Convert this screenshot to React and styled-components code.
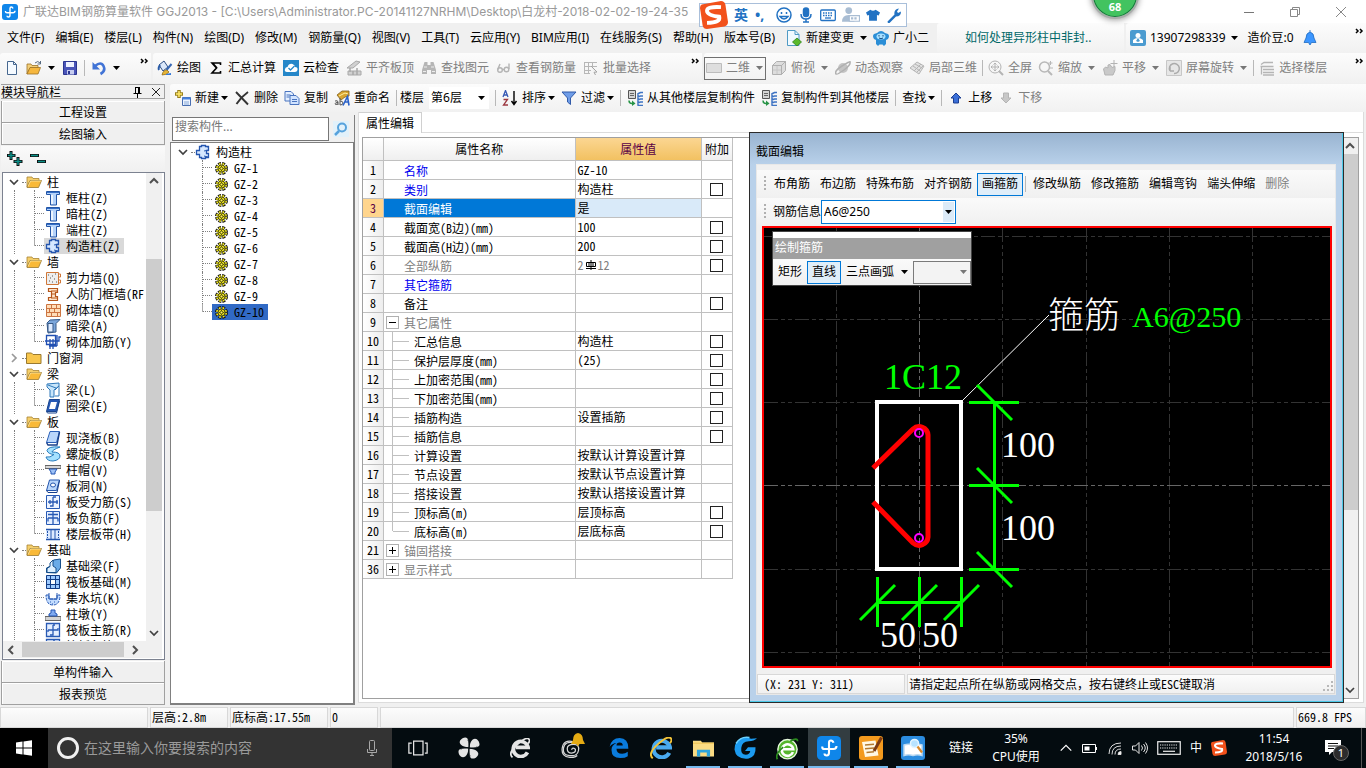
import React from "react";
import styled, { createGlobalStyle, css } from "styled-components";

const GlobalStyle = createGlobalStyle`
  * {
    box-sizing: border-box;
  }
  body {
    margin: 0;
    background: #f0f0f0;
    color: #000;
    font-family: "Noto Sans", "Noto Sans CJK SC", sans-serif;
    font-size: 12px;
    line-height: 16px;
  }
  button, input, select {
    font: inherit;
    color: inherit;
    margin: 0;
  }
  button {
    padding: 0;
    border: none;
    background: none;
    white-space: nowrap;
  }
  svg {
    display: block;
    flex-shrink: 0;
  }
`;

const song = `"Noto Sans Mono CJK SC", "Liberation Mono", "Noto Sans CJK SC", monospace`;

const shapes = {
  app: (
    <>
      <rect width="16" height="16" rx="3" fill="#0f86ea" />
      <path d="M11 4.500Q10.500 3 9.300 3 8 3 8 4.500V11q0 2-1.500 2T5 11.700M3.500 7v.500q0 1.200 1.500 1.200h6q2 0 2-2" fill="none" stroke="#fff" strokeWidth="1.400" />
    </>
  ),
  page: <path d="M3.500 1.500h6l3 3v10h-9zM9.500 1.500v3h3" fill="#f5faff" stroke="#46678f" />,
  folderOpen: (
    <>
      <path d="M1 3h5l1 1.500h6V7H4l-3 6z" fill="#f5cf6b" stroke="#a88434" strokeWidth=".8" />
      <path d="M1 13.500 4 6.500h11.500l-3 7z" fill="#f9b938" stroke="#9a7a30" strokeWidth=".8" />
      <path d="M2 12.500 4.500 7H15" fill="none" stroke="#fff0b5" strokeWidth=".7" />
    </>
  ),
  folder: <path d="M.5 3h5l1.500 1.500h8v9H.5z" fill="#f8c64d" stroke="#9a7a30" />,
  openFile: (
    <>
      <path d="M1 4h4l1 1.500h6V8H4l-3 6z" fill="#f3cf79" stroke="#9c7227" strokeWidth=".8" />
      <path d="M1 14 4 7.500h10.500L12 14z" fill="#f6b73e" stroke="#9c7227" strokeWidth=".8" />
      <path d="M9 3q3-3 5 0M14.500 1v3h-3" fill="none" stroke="#566a80" />
    </>
  ),
  save: (
    <>
      <path d="M1.500 1.500h13v13h-13z" fill="#4a55b8" stroke="#2b3590" />
      <path d="M4 2h8v5H4z" fill="#eef1ff" />
      <path d="M5 10h7v4.500H5z" fill="#c7cdf0" />
      <path d="M6 11h2v3H6z" fill="#2b3590" />
    </>
  ),
  undo: (
    <>
      <path d="M4 6q6-5 8.500 0t-3 8" fill="none" stroke="#4174d6" strokeWidth="2.600" />
      <path d="M1.500 2v7.500H9z" fill="#4174d6" />
    </>
  ),
  paint: (
    <>
      <path d="M2 5 7 1l4 6-5 4z" fill="#dbe8fa" stroke="#2c4d83" />
      <path d="M3 5q-2 3-1 5" stroke="#295ba8" strokeWidth="2" fill="none" />
      <path d="m14.500 4-5 6" stroke="#3767b4" strokeWidth="2" />
      <path d="M5 15q1-5 5-5l2 2q-2 3-7 3" fill="#e8b635" stroke="#866213" strokeWidth=".7" />
      <path d="m9 14 5-1v2H9z" fill="#3779d8" />
    </>
  ),
  sigma: <path d="M12.500 5V3H4l4.500 5L4 13h8.500v-2M5 3.500 9 8" fill="none" stroke="#000" strokeWidth="1.600" />,
  cloud: (
    <>
      <rect width="16" height="16" fill="#2687c9" />
      <path d="M4 12q-3-.5-2-3 .5-2 2.500-2Q6 3 9.500 4q2.500 1 2.500 3 3 0 2.500 3-.5 2-2.500 2z" fill="#fff" />
      <path d="m5.500 8 2 2 4-4" fill="none" stroke="#2687c9" strokeWidth="1.300" />
    </>
  ),
  align: (
    <>
      <path d="M1 8 10 1l4 1-7 6zM2 11h13v4H2z" fill="#d0d0d0" stroke="#a8a8a8" />
      <path d="M4 8v4M7 11v4M11 8v7" stroke="#a8a8a8" strokeWidth="1.500" />
    </>
  ),
  binoculars: (
    <>
      <path d="M3.500 2h3v3h3V2h3l2.500 8v4h-5v-4h-4v4H1v-4z" fill="#b5b5b5" />
      <path d="M3 7h3M10 7h3M2 11.500h3M11 11.500h3" stroke="#ededed" />
    </>
  ),
  glasses: (
    <g fill="none" stroke="#b4b4b4" strokeWidth="1.400">
      <circle cx="4" cy="10" r="2.300" />
      <circle cx="10.500" cy="9.500" r="2.300" />
      <path d="M6 9.500h2.500M1.700 9.500 4 4M13 9V3.500" />
    </g>
  ),
  batch: (
    <>
      <path d="M1.500 2v12M5.500 2v12M9.500 2v5M1 2.500h13M1 6.500h13M1 10.500h7M1 13.500h6" stroke="#b7b7b7" fill="none" />
      <path d="m8 6 6 6-3 .3 1.500 2.700" stroke="#a4a4a4" fill="#eee" />
    </>
  ),
  flat: <path d="M.5 3.500h15v9H.5z" fill="#dedede" stroke="#bcbcbc" />,
  cube: (
    <>
      <path d="M1.500 5.500h9v9h-9zM1.500 5.500l4-4h9l-4 4zM10.500 14.500l4-4v-9l-4 4z" fill="#ddd" stroke="#b0b0b0" />
      <path d="M2 10h8M6 6v8" stroke="#c6c6c6" />
    </>
  ),
  orbit: (
    <>
      <circle cx="8" cy="8" r="5" fill="#c4c4c4" />
      <path d="M1 14q-2-3 6-8t8-4q1 3-6 8t-8 4" fill="none" stroke="#b0b0b0" strokeWidth="1.500" />
    </>
  ),
  local3d: (
    <>
      <path d="m1 8 7-6 7 4-5 8z" fill="#e2e2e2" stroke="#b5b5b5" />
      <path d="m4 6 7 5M6 4l7 4M5 11l7-7M8 12l6-6" stroke="#b5b5b5" fill="none" />
    </>
  ),
  fullscreen: (
    <g fill="none" stroke="#b4b4b4">
      <circle cx="7" cy="7" r="6" />
      <path d="M7 3v8M3 7h8M5.500 4.500 7 3l1.500 1.500M5.500 9.500 7 11l1.500-1.500M4.500 5.500 3 7l1.500 1.500M9.500 5.500 11 7 9.500 8.500" />
      <path d="m11 11 4 4" strokeWidth="2" />
    </g>
  ),
  zoomIcon: (
    <g fill="none" stroke="#b8b8b8">
      <circle cx="6.500" cy="7" r="5" strokeWidth="1.500" />
      <path d="m10 11 4 4" strokeWidth="2" />
      <path d="M12.500 1v4M10.500 3h4M11 8h4" />
    </g>
  ),
  pan: (
    <>
      <path d="M3 15 1.500 9l2-2L6 8V5l2-.500 2 3 3-1v4L11 15z" fill="#c9c9c9" stroke="#b3b3b3" />
      <path d="M12 0v7M8.500 3.500h7" stroke="#b3b3b3" />
    </>
  ),
  rotate: (
    <>
      <path d="M.5.500h15v15H.5z" fill="#e6e6e6" stroke="#c7c7c7" />
      <path d="M4 11a5 5 0 1 1 4 2.500M4 11v-4M4 11h4" fill="none" stroke="#ababab" strokeWidth="1.500" />
    </>
  ),
  floors: <path d="M2 4.500 5 2.500h9M1.500 6.500h13M4 9.500h11M4 12.500h11M4 15h11M2.500 6.500v8" fill="none" stroke="#b5b5b5" strokeWidth="1.300" />,
  newItem: (
    <>
      <path d="M4 0v8M0 4h8" stroke="#98801c" strokeWidth="3.500" />
      <path d="M4 1v6M1 4h6" stroke="#ffe76a" strokeWidth="1.600" />
      <path d="M7.500 7.500h8v8h-8z" fill="#edf4ff" stroke="#496eb1" />
      <path d="M7.500 8.500h8" stroke="#4380df" strokeWidth="2" />
      <path d="M9 12h5M9 14h5" stroke="#87a8d7" />
    </>
  ),
  cross: <path d="m2 2 12 12.500M14 2Q7 7 2.500 14" fill="none" stroke="#333" strokeWidth="1.900" />,
  copy: (
    <>
      <path d="M1 1.500h6l2.500 2.500v7H1z" fill="#e4efff" stroke="#4a74bf" />
      <path d="M6 5.500h6l3 3v6H6z" fill="#d2e4ff" stroke="#4a74bf" />
      <path d="M2.500 5h4M2.500 7h3M8 9.500h5M8 11.500h5" stroke="#4a74bf" />
    </>
  ),
  rename: (
    <>
      <path d="m3 5 5-4h7v5l-4 1-4 3z" fill="#d9a52f" stroke="#7d5e1a" strokeWidth=".8" />
      <path d="m5 6 6-3 3 1" stroke="#fff0a0" fill="none" />
      <path d="M1 11q3-1 3 1v3M4 12.500q-3 0-3 1.300t3 .2M6 8v7q3 0 3-2t-3-2" stroke="#555" fill="none" />
      <path d="m9 15.500 4.500-9 1.500 9M11 12h4" fill="none" stroke="#2b62c9" strokeWidth="1.600" />
    </>
  ),
  sort: (
    <>
      <path d="m1 7 2.500-6.500L6 7M2 5h3" fill="none" stroke="#3659b5" strokeWidth="1.300" />
      <path d="M1.500 9.500h4l-4 5.500h4.500" fill="none" stroke="#9c3941" strokeWidth="1.300" />
      <path d="M12 1v13M9.500 11l2.500 3.500 2.500-3.500" fill="none" stroke="#000" strokeWidth="1.400" />
    </>
  ),
  filter: <path d="M1 2h14l-5.500 6v6.500L6.500 12V8z" fill="#6f9de8" stroke="#315aa8" />,
  copyFloor: (
    <>
      <path d="M1.500.500h7v8h-7z" fill="#d5d5d5" stroke="#555" />
      <path d="M3 3.500h4M3 5.500h4" stroke="#666" />
      <path d="M2 10.500q0 3 3 3h1" fill="none" stroke="#279346" strokeWidth="1.500" />
      <path d="m5 10.500 3.500 3L5 16z" fill="#279346" />
      <path d="m10.500 4 3-1.500H16M10.500 7l3-1H16M10.500 10l3-1H16M10.500 13l3-1H16M10.500 15.500H16M11 3.500v12" fill="none" stroke="#3f74c3" strokeWidth="1.500" />
    </>
  ),
  up: <path d="m8 3 5 5h-2.500v5h-5V8H3z" fill="#3b6fd8" stroke="#1d3f91" />,
  down: <path d="M8 13 3 8h2.500V3h5v5H13z" fill="#c7c7c7" stroke="#b4b4b4" />,
  newChange: (
    <>
      <path d="M1.500.500h7.500l4 4v11H1.500z" fill="#f1faff" stroke="#4f9ac5" />
      <path d="M9 .5v4h4" fill="none" stroke="#4f9ac5" />
      <path d="m11 8 4.500 4-4.500 4-4.500-4z" fill="#59b92c" stroke="#2c8217" strokeWidth=".8" />
    </>
  ),
  mascot: (
    <>
      <path d="M4 3Q8-1 12 3l3 1q2 2 0 5l-2 1v4l-2 2-1.500-1.500h-3L5 16l-2-2v-4L1 9Q-1 6 1 4z" fill="#2b8ed6" />
      <ellipse cx="8" cy="6.500" rx="4.500" ry="3" fill="#a8e0ff" />
      <path d="M6 5v1.500M10 5v1.500M6 8q2 1.500 4 0" stroke="#134d83" fill="none" />
    </>
  ),
  user: (
    <>
      <rect width="16" height="16" rx="2" fill="#4b9bd0" />
      <circle cx="8" cy="5.500" r="2.500" fill="#fff" />
      <path d="M3 13V10q2-2 5-2t5 2v3z" fill="#fff" />
      <path d="m8 8 2 3-2 1-2-1z" fill="#4b9bd0" />
    </>
  ),
  bell: <path d="M8 0v2q4 1 4 6l2 4.500H9.500L8 15l-1.500-2.500H2L4 8q0-5 4-6" fill="#3c96ff" stroke="#1e6bc0" strokeWidth=".8" />,
  search: (
    <g fill="none" stroke="#56a2dc">
      <circle cx="9" cy="6.500" r="4" strokeWidth="2" />
      <path d="m6 10-4 4" strokeWidth="2.500" />
    </g>
  ),
  plusPlus: (
    <>
      <path d="M4 0v9M0 4.500h8.500M11 6v9M6.500 10.500h9" stroke="#111" strokeWidth="3" />
      <path d="M4 1v7M1 4.500h6.500M11 7v7M7.500 10.500h7" stroke="#0b9088" strokeWidth="1.400" />
    </>
  ),
  minusMinus: (
    <>
      <path d="M0 4.500h9M7 10.500h9" stroke="#111" strokeWidth="3" />
      <path d="M1 4.500h7M8 10.500h7" stroke="#0b9088" strokeWidth="1.400" />
    </>
  ),
  gear: (
    <>
      <circle cx="8" cy="8" r="6" fill="none" stroke="#111" strokeWidth="4" strokeDasharray="3.400 1.312" />
      <circle cx="8" cy="8" r="5.800" fill="none" stroke="#f2e920" strokeWidth="2" strokeDasharray="2.300 2.255" strokeDashoffset="-.5" />
      <circle cx="8" cy="8" r="4.300" fill="#f8ef26" stroke="#333300" />
      <path d="M8 4.500v7M4.500 8h7" stroke="#4a4800" />
      <circle cx="8" cy="8" r="1.800" fill="#fff35b" stroke="#333300" />
    </>
  ),
  column: (
    <>
      <path d="M1.500 1.500h13v3h-3V15h-6V4.500h-4z" fill="#b5d3fa" stroke="#2355a6" />
      <path d="M7 5v9" stroke="#fff" strokeWidth="1.500" />
      <path d="M2 2.500h12" stroke="#356fc6" />
    </>
  ),
  ctor: (
    <>
      <path d="M4.500 2.500h2v-1h4v1h3v4h-2v3h2v4h-3v1h-4v-1h-2v-3h-3v-4h3z" fill="#d6e8ff" stroke="#2455ae" strokeWidth="1.300" />
      <path d="m10 2 3 1M9 7l5-1M9 12l4 1" stroke="#2455ae" fill="none" />
    </>
  ),
  shear: (
    <>
      <path d="M1.500 2.500h12v12h-12z" fill="#eee" stroke="#d07738" />
      <path d="M3 5h1M7 6h1M10 4h1M5 8h1M9 9h1M4 11h1M7 12h1M11 12h1" stroke="#555" />
      <path d="M13.500 4h2v3h-2M13.500 10h2v3h-2" fill="none" stroke="#d07738" />
    </>
  ),
  frameWall: (
    <>
      <path d="M3.500 2.500h9v4h-2v4h2v4h-9v-3h3v-6h-3z" fill="#ffe5ca" stroke="#b5561b" strokeWidth="1.200" />
      <path d="M6 5h6M7 8h4M6 12h6" stroke="#b5561b" />
    </>
  ),
  brick: (
    <>
      <path d="M1.500 2.500h14v12h-14z" fill="#ffddb8" stroke="#cc7441" />
      <path d="M1 6.500h15M1 10.500h15M6.500 3v3M11.500 3v3M4.500 7v3M9.500 7v3M6.500 11v3M12.500 11v3" stroke="#cc7441" />
    </>
  ),
  hiddenBeam: (
    <>
      <path d="m2 5 3-3 10-.500-4 4V14l-8 1z" fill="#7ba6db" stroke="#365987" />
      <path d="M3 5.500h5V14H3z" fill="#dceaff" stroke="#365987" />
    </>
  ),
  rebarBrick: <path d="M1.500 1.500h9v9h-9zM0 7h14V3h2M5 5v10M8 5v10M4 12h8M12 1v11" fill="none" stroke="#204fb2" strokeWidth="1.300" />,
  beam: (
    <>
      <path d="M2 2 14 1v3l-5 4v7H5V8L2 5z" fill="#c8e6fb" stroke="#2e78ba" />
      <path d="m3 3 8 3M10 8l4-4v10h-4" fill="none" stroke="#2e78ba" />
    </>
  ),
  ring: (
    <>
      <path d="M4.500 1.500h10l-3 12h-10z" fill="#2759b5" stroke="#19458f" />
      <path d="M6 4h6l-2 7H4z" fill="#fff" />
      <path d="m1.500 13.500 1 1.500h9l3-12" fill="none" stroke="#19458f" />
    </>
  ),
  slab: (
    <>
      <path d="M5 1.500h9.500l-3 11h-10z" fill="#b9d6fb" stroke="#2b60b8" />
      <path d="M1.500 12.500 3 15h9l2.500-13" fill="none" stroke="#173f8b" strokeWidth="1.400" />
    </>
  ),
  spiral: <path d="M15 1Q3 0 2 4.500 3 8 9 8.500 5 12 1 11q1 4 7 4 7-1 7-5t-8-4q0-2 8-5" fill="#a5e1ff" stroke="#267bbd" />,
  cap: (
    <>
      <path d="M0 3.500h16v3H0z" fill="#d5d5d5" stroke="#666" />
      <path d="M4 7h8l-2 3v2H6v-2z" fill="#9ec2f7" stroke="#2355b3" />
    </>
  ),
  slabHole: (
    <>
      <path d="M4.500 2h10l-3 10.500h-10z" fill="#b9d6fb" stroke="#2355ad" />
      <path d="M1.500 12.500 3 14.500h9l2.500-12" stroke="#173f8b" fill="none" />
      <ellipse cx="8" cy="7" rx="2.500" ry="2" fill="#fff" stroke="#2355ad" />
    </>
  ),
  slabRebar: (
    <>
      <path d="M1.500 1.500h13v13h-13z" fill="#edf4ff" stroke="#295ab4" />
      <path d="M3 8h10M8 3v9H5M5 6v4M8 3h3M12 6v4" fill="none" stroke="#295ab4" strokeWidth="1.300" />
    </>
  ),
  negRebar: (
    <>
      <path d="M1.500 1.500h13v13h-13z" fill="#e5efff" stroke="#295ab4" />
      <path d="M8 2v12M3 4.500h10M3 8h10M3 11.500V8M13 11.500V8" fill="none" stroke="#295ab4" strokeWidth="1.300" />
    </>
  ),
  band: (
    <>
      <path d="M1 3h14v11H1z" fill="#dceaff" />
      <path d="M1 3.500h14M1 13.500h14" stroke="#2355ae" strokeWidth="1.500" />
      <path d="M6 3v11M10 3v11" stroke="#2355ae" />
      <path d="M2.500 5v7M13.500 5v7" stroke="#2355ae" strokeDasharray="2 1" />
    </>
  ),
  foundBeam: (
    <>
      <path d="M1.500 14.500V10l4-2 3-6 7-1v9l-4 5z" fill="#6aabe8" stroke="#174f8b" />
      <path d="M2 14.500v-4l3-2V5l3-3v6l3 2v4.500z" fill="#dcefff" stroke="#174f8b" />
    </>
  ),
  raft: (
    <>
      <path d="M1 1h14v14H1z" fill="#9dcaff" />
      <path d="M5.500 5.500h5v5h-5z" fill="#fff" />
      <path d="M1.500 1.500h13v13h-13zM5.500 1v14M10.500 1v14M1 5.500h14M1 10.500h14" fill="none" stroke="#133d86" />
    </>
  ),
  pit: (
    <>
      <path d="M1 5h3v4h8V5h3q0 10-7 10T1 5" fill="#c2dcff" stroke="#295ab4" strokeDasharray="3 1" />
      <path d="M4 3v6h8V3M5 12h1M9 12h1M7 14h1" fill="none" stroke="#295ab4" />
    </>
  ),
  pier: (
    <>
      <path d="M0 10.500h16v4H0z" fill="#d3d3d3" stroke="#666" />
      <path d="M4 10V8l2-1V4h4v3l2 1v2z" fill="#7ea9f0" stroke="#2355b3" />
    </>
  ),
  raftRebar: (
    <>
      <path d="M1.500 1.500h13v13h-13z" fill="#e5efff" stroke="#295ab4" strokeWidth="1.300" />
      <path d="M8 3v10H5M3 8h10V6M3 8v2M8 3h2" fill="none" stroke="#295ab4" strokeWidth="1.300" />
    </>
  ),
  chevDown: <path d="m4 6 4 4 4-4" fill="none" stroke="#404040" strokeWidth="1.700" />,
  chevRight: <path d="m6 4 4 4-4 4" fill="none" stroke="#999" strokeWidth="1.700" />,
  scrollRight: <path d="m6 4 4 4-4 4" fill="none" stroke="#505050" strokeWidth="2" />,
  chevLeft: <path d="m10 4-4 4 4 4" fill="none" stroke="#505050" strokeWidth="2" />,
  chevUp: <path d="m4 10 4-4 4 4" fill="none" stroke="#505050" strokeWidth="2" />,
  pin: <path d="M5.500 3v6M9.500 3v6M5 3.500h5M3.500 9.500h8M7.500 9.500V14M8.500 3v6" fill="none" stroke="#000" />,
  close: <path d="m4 4 8 8M12 4l-8 8" fill="none" stroke="#222" />,
  more: <path d="m6 6 2 2-2 2M10 6l2 2-2 2" fill="none" stroke="#000" strokeWidth="1.500" />,
  sogou: (
    <>
      <path d="m1 2 11-2q2 0 2.500 2L16 12q0 2-2 2.500L4 16q-2 0-2.500-2L0 4q0-1.500 1-2" fill="#f2511b" />
      <path d="M12 3.500Q4 3 4 5.500T11 9q1 3.500-7 3.500" fill="none" stroke="#fff" strokeWidth="2.200" />
    </>
  ),
  smile: (
    <g fill="none" stroke="#2272c3" strokeWidth="1.500">
      <circle cx="8" cy="8" r="7" />
      <path d="M5.500 5v2M10.500 5v2M4 9.500q4 5 8 0z" />
    </g>
  ),
  mic: (
    <g fill="none" stroke="currentColor" strokeWidth="1.500">
      <rect x="5.500" y="1" width="5" height="8.500" rx="2.500" fill="currentColor" />
      <path d="M3 7q0 5 5 5t5-5M8 12v3M5 15h6" />
    </g>
  ),
  micLine: (
    <g fill="none" stroke="#a8a8a8">
      <rect x="5.500" y=".5" width="5" height="10" rx="1" />
      <path d="M3.500 9v3.500h9V9M8 12.500V15M6 15.500h4" />
    </g>
  ),
  kbd: (
    <>
      <rect x=".7" y="3" width="14.600" height="10.500" rx="1" fill="none" stroke="currentColor" strokeWidth="1.300" />
      <path d="M3 6h10M3 8.500h10" stroke="currentColor" strokeWidth="1.300" strokeDasharray="1.500 1" />
      <path d="M5 11h6" stroke="currentColor" strokeWidth="1.300" />
    </>
  ),
  kbdThin: (
    <>
      <rect x=".5" y="3.800" width="15" height="8.400" fill="none" stroke="#eee" strokeWidth=".8" />
      <path d="M2 6h12M2 8h12" stroke="#eee" strokeWidth=".8" strokeDasharray=".8 .7" />
      <path d="M4 10.200h8" stroke="#eee" strokeWidth=".8" />
    </>
  ),
  person: (
    <>
      <circle cx="6" cy="4" r="3" fill="#a9bdd3" />
      <path d="M0 14q0-6 6-6t5 6z" fill="#a9bdd3" />
      <path d="M6.500 8.500h9v5h-9z" fill="#fff" stroke="#a9bdd3" />
      <path d="M8 11h6" stroke="#a9bdd3" strokeDasharray="2 1" strokeWidth="2" />
    </>
  ),
  shirt: <path d="M5 2q3 2 6 0l5 3-1.500 3.500-2-.500v6.500h-9V8l-2 .500L0 5z" fill="#2272c3" />,
  wrench: <path d="m1.500 14.500 7-7q-1-5 4.500-6l-2 3 1 1.500 3-1.500q0 5-5 5l-6.500 6.500q-2 .5-2-1.500" fill="#2272c3" />,
  windows: <path d="M0 2.500 6.500 1.600V7.600H0zM7.500 1.500 16 .3v7.300H7.500zM0 8.500h6.500v6L0 13.600zM7.500 8.500H16v7.300L7.500 14.600z" fill="#fff" />,
  taskview: <path d="M4.500 2.500h7.500v11h-7.500zM3 4H.7v8H3M13.500 4h1.800v8h-1.800" fill="none" stroke="#e6e6e6" />,
  pinwheel: (
    <>
      <path d="M7.600 7.500V3Q7-1 3 1 0 3 2 5.500 4 7.500 7.600 7.500M8.500 7.600H13q4-.600 2-4.600-2-3-4.500-1-2 2-2 5.600M8.400 8.500V13q.600 4 4.600 2 3-2 1-4.500-2-2-5.600-2M7.500 8.400H3q-4 .600-2 4.600 2 3 4.500 1 2-2 2-5.600" fill="#e5e5e5" />
      <path d="M8 8Q4 7 2 9M8 8q1-4-1-6M8 8q4 1 6-1M8 8q-1 4 1 6" stroke="#071014" strokeWidth=".6" fill="none" />
    </>
  ),
  explorerE: (
    <>
      <path d="M14 11.500a6 6 0 1 1 .5-4H4.500" fill="none" stroke="currentColor" strokeWidth="3" />
      <path d="M2 15.500Q-2 12 6 5t9.500-3.500q.5 1-1 3" fill="none" stroke="var(--orbit, currentColor)" strokeWidth="1.400" />
    </>
  ),
  edge: <path d="M.5 7Q2 0 8.500 0q7 0 7 8.500H6q0 4 4.500 4 2.500 0 4.500-1.500v3.500q-2 1.500-6 1.500-7 0-7-6.500Q2 5.500 6 4 3 4 .5 7M6 6h5q0-2.500-2.500-2.500T6 6" fill="#0a7bdc" />,
  swirl: (
    <g fill="none" stroke="#d7d7d7" strokeWidth="1">
      <path d="M11 4Q3 2 2 8t5 6q6 1 7-4t-4-5q-5 0-5 3.500T8.500 12q3.500 0 3-3-2.500-2-3 .5" />
      <path d="M10 3Q2 1 1 8t6 7.500q4 .5 6-1.500" />
    </g>
  ),
  explorer: (
    <>
      <path d="M0 2h6l1 1.500h9V14H0z" fill="#fbdc83" />
      <path d="M0 4h16" stroke="#f2c95c" />
      <path d="M3 14V9h10v5h-2.500v-3h-5v3z" fill="#2fa5dc" />
    </>
  ),
  gSwirl: (
    <>
      <path d="M16 1.500Q14 3.500 10.500 3.500 6 3.500 5.500 8t3 4.500Q11 12.500 11.500 10H8l2-2.500h5q.500 6-4.500 7.500Q2 16 1 9 1 2 8 1q2 0 4 .800z" fill="#1c9bf0" />
      <path d="M2 5Q5 0 11 1" fill="none" stroke="#6cd1ff" />
    </>
  ),
  greenE: (
    <>
      <circle cx="8" cy="8.500" r="6.700" fill="#55b52d" stroke="#e6f9dd" />
      <path d="M11.800 10.500A4 4 0 1 1 12 8.500H4.500" fill="none" stroke="#fff" strokeWidth="1.800" />
      <path d="M1 15.500Q-1 12 5 7M10 3q5-3 5 0" fill="none" stroke="#2b8b1e" strokeWidth="1.200" />
    </>
  ),
  notes: (
    <>
      <rect width="16" height="16" rx="2" fill="#f39a1e" />
      <path d="m2 4 9-1 2 10-9 1z" fill="#fff8e5" />
      <path d="m4 6 6-.5M4 8.500l6-.5M5 11l5-.5" stroke="#b37a32" />
      <path d="m15 1-5 9" stroke="#7b3b14" strokeWidth="2" />
    </>
  ),
  book: (
    <>
      <rect width="16" height="16" rx="2" fill="#2b8cdf" />
      <path d="M2 6q3-1 6 0 3-1 6 0v7q-3-1-6 0-3-1-6 0z" fill="#fff" stroke="#bcd9f1" />
      <circle cx="9" cy="5" r="2.700" fill="#b8e3ff" stroke="#e5f5ff" />
      <path d="m11 7 3 4" stroke="#d9892b" strokeWidth="1.500" />
    </>
  ),
  trayUp: <path d="m2 11 6-6 6 6" fill="none" stroke="#fff" strokeWidth="1.400" />,
  battery: (
    <>
      <path d="M.5 4.500h13v8H.5zM14.500 7v3" fill="none" stroke="#fff" />
      <path d="M2.500 6.500h5v4h-5z" fill="#fff" />
    </>
  ),
  wifi: (
    <g fill="none" stroke="#ddd">
      <path d="M2 14Q2 3 14 3M5 14.500Q5 6 14 6M8 14.500Q8 9 14 9" />
      <path d="M11 14.500q0-3 3-3v3z" fill="#fff" />
    </g>
  ),
  speaker: (
    <g fill="none" stroke="#e6e6e6">
      <path d="M.5 6h3L7 2.500v11L3.500 10h-3z" />
      <path d="M9.500 5.500q2 2.500 0 5M11.500 4q3.500 4 0 8M13.500 2.500q4 5.500 0 11" />
    </g>
  ),
  notify: (
    <>
      <path d="M0 0h16v12H7l-3 3v-3H0z" fill="#fff" />
      <path d="M3 3.500h10M3 6h10M3 8.500h6" stroke="#111" />
    </>
  ),
  min: <path d="M3 8.500h10" stroke="#777" />,
  restore: <path d="M3.500 5.500h7v7h-7zM5.500 5.500v-2h7v7h-2" fill="none" stroke="#888" />,
  winClose: <path d="m3 3 10 10M13 3 3 13" stroke="#888" fill="none" />,
};

const Icon = ({ name, size = 16, color }) => (
  <svg width={size} height={size} viewBox="0 0 16 16" color={color} aria-hidden="true">
    {shapes[name]}
  </svg>
);

const Caret = ({ dim }) => (
  <svg width="7" height="4" viewBox="0 0 7 4" aria-hidden="true">
    <path d="M0 0h7L3.500 4z" fill={dim ? "#777" : "#000"} />
  </svg>
);

const menus = [
  "文件(F)", "编辑(E)", "楼层(L)", "构件(N)", "绘图(D)", "修改(M)", "钢筋量(Q)",
  "视图(V)", "工具(T)", "云应用(Y)", "BIM应用(I)", "在线服务(S)", "帮助(H)", "版本号(B)",
];

const modules = [
  { name: "柱", open: true, items: [["column", "框柱(Z)"], ["column", "暗柱(Z)"], ["column", "端柱(Z)"], ["ctor", "构造柱(Z)"]] },
  { name: "墙", open: true, items: [["shear", "剪力墙(Q)"], ["frameWall", "人防门框墙(RF"], ["brick", "砌体墙(Q)"], ["hiddenBeam", "暗梁(A)"], ["rebarBrick", "砌体加筋(Y)"]] },
  { name: "门窗洞", open: false, items: [] },
  { name: "梁", open: true, items: [["beam", "梁(L)"], ["ring", "圈梁(E)"]] },
  { name: "板", open: true, items: [["slab", "现浇板(B)"], ["spiral", "螺旋板(B)"], ["cap", "柱帽(V)"], ["slabHole", "板洞(N)"], ["slabRebar", "板受力筋(S)"], ["negRebar", "板负筋(F)"], ["band", "楼层板带(H)"]] },
  { name: "基础", open: true, items: [["foundBeam", "基础梁(F)"], ["raft", "筏板基础(M)"], ["pit", "集水坑(K)"], ["pier", "柱墩(Y)"], ["raftRebar", "筏板主筋(R)"], ["raftRebar", "筏板负筋(X)"]] },
];

const components = ["GZ-1", "GZ-2", "GZ-3", "GZ-4", "GZ-5", "GZ-6", "GZ-7", "GZ-8", "GZ-9", "GZ-10"];

const properties = [
  { no: 1, name: "名称", value: "GZ-10", tone: "blue" },
  { no: 2, name: "类别", value: "构造柱", tone: "blue", check: true },
  { no: 3, name: "截面编辑", value: "是", selected: true },
  { no: 4, name: "截面宽(B边)(mm)", value: "100", check: true },
  { no: 5, name: "截面高(H边)(mm)", value: "200", check: true },
  { no: 6, name: "全部纵筋", value: "rebar", tone: "gray", check: true },
  { no: 7, name: "其它箍筋", value: "", tone: "blue" },
  { no: 8, name: "备注", value: "", check: true },
  { no: 9, name: "其它属性", value: "", tone: "gray", box: "minus" },
  { no: 10, name: "汇总信息", value: "构造柱", check: true, child: true },
  { no: 11, name: "保护层厚度(mm)", value: "(25)", check: true, child: true },
  { no: 12, name: "上加密范围(mm)", value: "", check: true, child: true },
  { no: 13, name: "下加密范围(mm)", value: "", check: true, child: true },
  { no: 14, name: "插筋构造", value: "设置插筋", check: true, child: true },
  { no: 15, name: "插筋信息", value: "", check: true, child: true },
  { no: 16, name: "计算设置", value: "按默认计算设置计算", child: true },
  { no: 17, name: "节点设置", value: "按默认节点设置计算", child: true },
  { no: 18, name: "搭接设置", value: "按默认搭接设置计算", child: true },
  { no: 19, name: "顶标高(m)", value: "层顶标高", check: true, child: true },
  { no: 20, name: "底标高(m)", value: "层底标高", check: true, child: true, last: true },
  { no: 21, name: "锚固搭接", value: "", tone: "gray", box: "plus" },
  { no: 36, name: "显示样式", value: "", tone: "gray", box: "plus" },
];

const Tool = ({ icon, children, caret, dim }) => (
  <ToolButton $dim={dim}>
    {icon && <Icon name={icon} />}
    {children}
    {caret && <CaretSlot><Caret dim={dim} /></CaretSlot>}
  </ToolButton>
);

const Menu = () => (
  <MenuRow>
    <MenuList>
      {menus.map((m) => (
        <MenuItem key={m}>{m}</MenuItem>
      ))}
      <Tool icon="newChange" caret>新建变更</Tool>
      <MascotButton>
        <Icon name="mascot" />
        广小二
      </MascotButton>
    </MenuList>
    <TipBand>
      <TipLink href="#tip">如何处理异形柱中非封..</TipLink>
    </TipBand>
    <AccountBand>
      <Tool icon="user" caret>13907298339</Tool>
      <Tool>造价豆:0</Tool>
      <Icon name="bell" />
      <Overflow aria-label="更多"><Icon name="more" /></Overflow>
    </AccountBand>
  </MenuRow>
);

const MainToolbar = () => (
  <ToolbarRow>
    <FileBand>
      <Tool icon="page" />
      <Tool icon="openFile" caret />
      <Tool icon="save" />
      <Divider />
      <Tool icon="undo" caret />
      <Overflow aria-label="更多"><Icon name="more" /></Overflow>
    </FileBand>
    <DrawBand>
      <Tool icon="paint">绘图</Tool>
      <Tool icon="sigma">汇总计算</Tool>
      <Tool icon="cloud">云检查</Tool>
      <Tool icon="align" dim>平齐板顶</Tool>
      <Tool icon="binoculars" dim>查找图元</Tool>
      <Tool icon="glasses" dim>查看钢筋量</Tool>
      <Tool icon="batch" dim>批量选择</Tool>
      <Overflow aria-label="更多"><Icon name="more" /></Overflow>
    </DrawBand>
    <ViewBand>
      <ModeButton>
        <Icon name="flat" />
        二维
        <CaretSlot><Caret dim /></CaretSlot>
      </ModeButton>
      <Tool icon="cube" dim caret>俯视</Tool>
      <Tool icon="orbit" dim>动态观察</Tool>
      <Tool icon="local3d" dim>局部三维</Tool>
      <Divider />
      <Tool icon="fullscreen" dim>全屏</Tool>
      <Tool icon="zoomIcon" dim caret>缩放</Tool>
      <Tool icon="pan" dim caret>平移</Tool>
      <Tool icon="rotate" dim caret>屏幕旋转</Tool>
      <Divider />
      <Tool icon="floors" dim>选择楼层</Tool>
      <Overflow aria-label="更多"><Icon name="more" /></Overflow>
    </ViewBand>
  </ToolbarRow>
);

const ModulePanel = () => (
  <Nav>
    <NavHeader>
      <NavTitle>模块导航栏</NavTitle>
      <button aria-label="固定"><Icon name="pin" /></button>
      <button aria-label="关闭"><Icon name="close" /></button>
    </NavHeader>
    <NavButton>工程设置</NavButton>
    <NavButton>绘图输入</NavButton>
    <TreeTools>
      <button aria-label="全部展开"><Icon name="plusPlus" /></button>
      <button aria-label="全部折叠"><Icon name="minusMinus" /></button>
    </TreeTools>
    <TreeFrame>
      <TreeBody>
        <Tree>
          {modules.map((group) => (
            <li key={group.name}>
              <TreeRow>
                <Icon name={group.open ? "chevDown" : "chevRight"} />
                <Stub />
                <Icon name={group.open ? "folderOpen" : "folder"} />
                <Label>{group.name}</Label>
              </TreeRow>
              <Branch>
                {group.items.map(([icon, label]) => (
                  <Leaf key={label}>
                    <LeafLine />
                    <LeafLabel $active={label === "构造柱(Z)"}>
                      <Icon name={icon} />
                      {label}
                    </LeafLabel>
                  </Leaf>
                ))}
              </Branch>
            </li>
          ))}
        </Tree>
        <VScroll>
          <Icon name="chevUp" />
          <VSpace $grow={70} />
          <VThumb $grow={251} />
          <VSpace $grow={113} />
          <Icon name="chevDown" />
        </VScroll>
      </TreeBody>
      <HScroll>
        <Icon name="chevLeft" />
        <HThumb />
        <Icon name="scrollRight" />
      </HScroll>
    </TreeFrame>
    <NavButton>单构件输入</NavButton>
    <NavButton>报表预览</NavButton>
  </Nav>
);

const EditToolbar = () => (
  <EditRow>
    <Tool icon="newItem" caret>新建</Tool>
    <Tool icon="cross">删除</Tool>
    <Tool icon="copy">复制</Tool>
    <Tool icon="rename">重命名</Tool>
    <FloorField>
      <Divider />
      <label htmlFor="floor">楼层</label>
      <SelectWrap $width="62px">
        <FloorSelect id="floor" defaultValue="第6层">
          <option>第6层</option>
        </FloorSelect>
        <SelectArrow><Caret /></SelectArrow>
      </SelectWrap>
    </FloorField>
    <Divider />
    <Tool icon="sort" caret>排序</Tool>
    <Tool icon="filter" caret>过滤</Tool>
    <Divider />
    <Tool icon="copyFloor">从其他楼层复制构件</Tool>
    <Tool icon="copyFloor">复制构件到其他楼层</Tool>
    <Divider />
    <Tool caret>查找</Tool>
    <Divider />
    <Tool icon="up">上移</Tool>
    <Tool icon="down" dim>下移</Tool>
  </EditRow>
);

const ComponentPanel = () => (
  <ComponentColumn>
    <SearchRow>
      <SearchInput aria-label="搜索构件" placeholder="搜索构件..." />
      <SearchButton aria-label="搜索"><Icon name="search" /></SearchButton>
    </SearchRow>
    <ComponentTree>
      <TreeRow>
        <Icon name="chevDown" />
        <Stub />
        <Icon name="ctor" />
        <Label>构造柱</Label>
      </TreeRow>
      <Branch $plain>
        {components.map((c) => (
          <Leaf key={c}>
            <LeafLine />
            <GzLabel $active={c === "GZ-10"}>
              <Icon name="gear" size={13} />
              {c}
            </GzLabel>
          </Leaf>
        ))}
      </Branch>
    </ComponentTree>
  </ComponentColumn>
);

const RebarValue = () => (
  <RebarText>
    2
    <svg width="12" height="12" viewBox="0 0 12 12" aria-label="三级钢">
      <path d="M6 1v10M1.500 3.500h9v4h-9zM1 9.500h10M4 3v5M8 3v5" fill="none" stroke="#000" />
    </svg>
    12
  </RebarText>
);

const ExpandMark = ({ kind }) => (
  <ExpandBox aria-label={kind === "plus" ? "展开" : "折叠"}>
    <svg width="11" height="11" viewBox="0 0 11 11">
      <path d={kind === "plus" ? "M2 5.500h7M5.500 2v7" : "M2 5.500h7"} stroke="#000" />
    </svg>
  </ExpandBox>
);

const PropertyTable = () => (
  <Table>
    <colgroup>
      <col width="21" />
      <col width="191" />
      <col width="126" />
      <col width="31" />
    </colgroup>
    <thead>
      <tr>
        <HeadCell />
        <HeadCell>属性名称</HeadCell>
        <HeadCell $hot>属性值</HeadCell>
        <HeadCell>附加</HeadCell>
      </tr>
    </thead>
    <tbody>
      {properties.map((p) => (
        <tr key={p.no}>
          <NoCell $selected={p.selected}>{p.no}</NoCell>
          <NameCell $tone={p.tone} $selected={p.selected}>
            <NameInner>
              {p.child ? <Twig $last={p.last} /> : <BoxSlot>{p.box && <ExpandMark kind={p.box} />}</BoxSlot>}
              {p.name}
            </NameInner>
          </NameCell>
          <ValueCell $selected={p.selected}>{p.value === "rebar" ? <RebarValue /> : p.value}</ValueCell>
          <CheckCell>{p.check && <Check type="checkbox" aria-label={p.name} />}</CheckCell>
        </tr>
      ))}
    </tbody>
  </Table>
);

const gridX = [72, 155, 238, 322, 405, 488];
const gridY = [8, 91, 174, 257, 341, 424];

const SectionDrawing = () => (
  <Drawing role="img" aria-label="构造柱截面">
    <g strokeDasharray="14 3 4 3 4 3">
      {gridX.map((x) => (
        <line key={x} x1={x + 0.5} x2={x + 0.5} y1="0" y2="100%" stroke={x === 155 ? "#666" : "#333"} />
      ))}
      {gridY.map((y) => (
        <line key={y} x1="0" x2="100%" y1={y + 0.5} y2={y + 0.5} stroke={y === 257 ? "#666" : "#333"} />
      ))}
    </g>
    <rect x="113" y="174" width="84" height="167" fill="none" stroke="#fff" strokeWidth="4" />
    <path d="M198 173 285 87" stroke="#fff" />
    <g fill="none" stroke="#0f0" strokeWidth="3">
      <path d="M230.500 174.500v167M205 174.500h50M205 257.500h50M205 341.500h50" />
      <path d="m213 157 35 35M213 240l35 35M213 324l35 35" />
      <path d="M113.500 374.500h84M113.500 349v50M155.500 349v50M197.500 349v50" />
      <path d="m96 392 35-35M138 392l35-35M180 392l35-35" />
    </g>
    <path d="M109 240 149 201A9 9 0 0 1 164 207V309A9 9 0 0 1 149 315L109 274" fill="none" stroke="#f00" strokeWidth="5" />
    <g fill="none" stroke="#f0f" strokeWidth="2">
      <circle cx="155" cy="205" r="4" />
      <circle cx="155" cy="310" r="4" />
    </g>
    <CadText x="120" y="161" $green>1C12</CadText>
    <CadText x="237" y="229">100</CadText>
    <CadText x="237" y="312">100</CadText>
    <CadText x="116" y="419">50</CadText>
    <CadText x="158" y="419">50</CadText>
    <CadText x="284" y="100">箍筋</CadText>
    <CadText x="368" y="99" $green $small>A6@250</CadText>
  </Drawing>
);

const SectionDialog = () => (
  <Dialog role="dialog" aria-label="截面编辑">
    <DialogTitle>截面编辑</DialogTitle>
    <DialogBody>
      <DialogTools>
        <Grip />
        <DialogButton>布角筋</DialogButton>
        <DialogButton>布边筋</DialogButton>
        <DialogButton>特殊布筋</DialogButton>
        <DialogButton>对齐钢筋</DialogButton>
        <DialogButton $on>画箍筋</DialogButton>
        <DialogDivider />
        <DialogButton>修改纵筋</DialogButton>
        <DialogButton>修改箍筋</DialogButton>
        <DialogButton>编辑弯钩</DialogButton>
        <DialogButton>端头伸缩</DialogButton>
        <DialogButton $dim>删除</DialogButton>
      </DialogTools>
      <DialogTools>
        <Grip />
        <RebarLabel htmlFor="rebar">钢筋信息</RebarLabel>
        <SelectWrap $width="135px">
          <RebarSelect id="rebar" defaultValue="A6@250">
            <option>A6@250</option>
          </RebarSelect>
          <SelectArrow $blue><Caret /></SelectArrow>
        </SelectWrap>
      </DialogTools>
      <Canvas>
        <SectionDrawing />
        <Floating>
          <FloatingTitle>绘制箍筋</FloatingTitle>
          <FloatingTools>
            <DialogButton>矩形</DialogButton>
            <DialogButton $on>直线</DialogButton>
            <DialogButton>三点画弧</DialogButton>
            <FloatCaret><Caret /></FloatCaret>
            <SelectWrap $width="58px">
              <ArcSelect aria-label="半径" defaultValue="">
                <option value=""></option>
              </ArcSelect>
              <SelectArrow><Caret dim /></SelectArrow>
            </SelectWrap>
          </FloatingTools>
        </Floating>
      </Canvas>
      <DialogStatus>
        <StatusCell $width="148px" $pad>(X: 231 Y: 311)</StatusCell>
        <MessageCell $grow>
          请指定起点所在纵筋或网格交点，按右键终止或ESC键取消
          <svg width="12" height="12" viewBox="0 0 12 12" aria-hidden="true">
            <path d="M9 1h2M9 5h2M5 5h2M9 9h2M5 9h2M1 9h2" stroke="#b8b8b8" strokeWidth="2" />
          </svg>
        </MessageCell>
      </DialogStatus>
    </DialogBody>
  </Dialog>
);

const PropertyPanel = () => (
  <PropertyColumn>
    <Tabs>
      <TabButton>属性编辑</TabButton>
      <TabRule />
    </Tabs>
    <PropertyFrame>
      <PropertyInner>
        <PropertyTable />
        <OuterScroll>
          <Icon name="chevUp" />
          <VThumb $grow={356} />
          <VSpace $grow={172} />
          <Icon name="chevDown" />
        </OuterScroll>
      </PropertyInner>
      <SectionDialog />
    </PropertyFrame>
  </PropertyColumn>
);

const Taskbar = () => (
  <TaskRow>
    <StartButton aria-label="开始"><Icon name="windows" /></StartButton>
    <TaskSearch>
      <CortanaRing />
      <TaskInput aria-label="搜索" placeholder="在这里输入你要搜索的内容" />
      <Icon name="micLine" />
    </TaskSearch>
    <TaskGroup>
      <TaskButton $wide aria-label="任务视图"><Icon name="taskview" size={20} /></TaskButton>
      <TaskButton $wide aria-label="风车"><Icon name="pinwheel" size={22} /></TaskButton>
      <TaskButton $wide aria-label="浏览器"><Icon name="explorerE" size={20} color="#e5e5e5" /></TaskButton>
      <TaskButton $wide aria-label="提醒">
        <Icon name="swirl" size={20} />
        <TaskBell>
          <svg width="14" height="14" viewBox="0 0 14 14"><path d="M7 0q5 1 5 7l2 4H8.500L7 13.500 5.500 11H0l2-4q0-6 5-7" fill="#e5ab13" /></svg>
        </TaskBell>
      </TaskButton>
    </TaskGroup>
    <TaskGroup $gap>
      <TaskButton aria-label="Edge"><Icon name="edge" size={20} /></TaskButton>
      <IeButton aria-label="IE"><Icon name="explorerE" size={22} color="#4aaaf0" /></IeButton>
      <TaskButton $open aria-label="文件资源管理器"><Icon name="explorer" size={21} /></TaskButton>
      <TaskButton $open aria-label="G"><Icon name="gSwirl" size={24} /></TaskButton>
      <TaskButton $open aria-label="360浏览器"><Icon name="greenE" size={23} /></TaskButton>
      <TaskButton $open $active aria-label="广联达"><Icon name="app" size={24} /></TaskButton>
      <TaskButton $open aria-label="便签"><Icon name="notes" size={24} /></TaskButton>
      <TaskButton $open aria-label="阅读"><Icon name="book" size={24} /></TaskButton>
    </TaskGroup>
    <Tray>
      <span>链接</span>
      <TrayStack>
        <span>35%</span>
        <span>CPU使用</span>
      </TrayStack>
      <TrayIcons>
        <Icon name="trayUp" size={14} />
        <Icon name="battery" />
        <Icon name="wifi" />
        <Icon name="speaker" />
        <Icon name="kbdThin" size={24} />
        <span>中</span>
        <Icon name="sogou" />
      </TrayIcons>
      <TrayStack $wide>
        <span>11:54</span>
        <span>2018/5/16</span>
      </TrayStack>
      <NotifyButton aria-label="通知">
        <Icon name="notify" />
        <Badge>1</Badge>
      </NotifyButton>
      <DesktopEdge />
    </Tray>
  </TaskRow>
);

const App = () => (
  <>
    <GlobalStyle />
    <Page>
      <TitleBar>
        <Icon name="app" />
        <TitleText>
          广联达BIM钢筋算量软件 GGJ2013 - [C:\Users\Administrator.PC-20141127NRHM\Desktop\白龙村-2018-02-02-19-24-35
        </TitleText>
        <WindowButtons>
          <button aria-label="最小化"><Icon name="min" /></button>
          <button aria-label="还原"><Icon name="restore" /></button>
          <button aria-label="关闭"><Icon name="winClose" /></button>
        </WindowButtons>
      </TitleBar>
      <InputBar>
        <Icon name="sogou" size={28} />
        <InputMode>英</InputMode>
        <InputComma>•,</InputComma>
        <Icon name="smile" />
        <Icon name="mic" color="#2272c3" />
        <Icon name="kbd" color="#2272c3" />
        <Icon name="person" size={18} />
        <Icon name="shirt" size={14} />
        <Icon name="wrench" />
      </InputBar>
      <Ball>68</Ball>
      <Menu />
      <MainToolbar />
      <Main>
        <ModulePanel />
        <Work>
          <EditToolbar />
          <Panels>
            <ComponentPanel />
            <PropertyPanel />
          </Panels>
        </Work>
      </Main>
      <StatusBar>
        <StatusCell $width="148px" />
        <StatusCell $width="78px">层高:2.8m</StatusCell>
        <StatusCell $width="98px">底标高:17.55m</StatusCell>
        <StatusCell $width="48px">0</StatusCell>
        <StatusCell $grow />
        <StatusCell $width="70px">669.8 FPS</StatusCell>
      </StatusBar>
      <Taskbar />
    </Page>
  </>
);

export default App;

const Page = styled.div`
  position: relative;
  display: flex;
  flex-direction: column;
  height: 100vh;
  overflow: hidden;
`;

const TitleBar = styled.header`
  display: flex;
  align-items: center;
  gap: 5px;
  height: 23px;
  padding-left: 2px;
  background: #fff;
  color: #999;
`;

const TitleText = styled.h1`
  flex: 1;
  margin: 0;
  font-family: Inter, "Noto Sans CJK SC", sans-serif;
  font-size: 12px;
  font-weight: 400;
  white-space: nowrap;
  overflow: hidden;
`;

const WindowButtons = styled.div`
  display: flex;
  gap: 30px;
  padding-right: 17px;
`;

const InputBar = styled.div`
  position: absolute;
  top: 3px;
  left: 699px;
  display: flex;
  align-items: center;
  gap: 6px;
  height: 24px;
  width: 208px;
  border: 1px solid #a9bfda;
  background: #fff;
  color: #2272c3;
`;

const InputMode = styled.b`
  font-size: 14px;
`;

const InputComma = styled.b`
  width: 16px;
  padding-left: 1px;
  font-size: 14px;
`;

const Ball = styled.div`
  position: absolute;
  top: -29px;
  left: 1091px;
  width: 48px;
  height: 48px;
  padding-top: 26px;
  border: 2px solid #a9adab;
  border-radius: 50%;
  background: #42c360;
  box-shadow: inset 0 0 0 1px #17743c, 0 1px 6px rgba(0, 0, 0, 0.4);
  color: #fff;
  font-size: 11px;
  font-weight: 700;
  text-align: center;
`;

const MenuRow = styled.nav`
  display: flex;
  height: 30px;
  gap: 2px;
`;

const MenuList = styled.div`
  display: flex;
  align-items: center;
  gap: 11px;
  width: 935px;
  padding-left: 7px;
`;

const MenuItem = styled.button``;

const band = css`
  display: flex;
  align-items: center;
  background: linear-gradient(#fcfcfc, #f1f1f1);
  border-radius: 3px 0 0 3px;
`;

const TipBand = styled.div`
  ${band}
  width: 187px;
  padding-left: 28px;
`;

const TipLink = styled.a`
  color: #006868;
  text-decoration: none;
  white-space: nowrap;
`;

const AccountBand = styled.div`
  ${band}
  flex: 1;
  gap: 8px;
  padding-left: 4px;
`;

const ToolButton = styled.button`
  display: flex;
  align-items: center;
  gap: 4px;
  color: ${(props) => (props.$dim ? "#808080" : "#000")};
`;

const MascotButton = styled(ToolButton)`
  margin-left: -6px;
`;

const CaretSlot = styled.span`
  display: flex;
  justify-content: center;
  width: 10px;
`;

const Overflow = styled.button`
  align-self: flex-start;
  margin-left: auto;
`;

const ToolbarRow = styled.div`
  display: flex;
  gap: 2px;
  height: 30px;
`;

const FileBand = styled.div`
  ${band}
  gap: 6px;
  width: 151px;
  padding-left: 4px;
`;

const DrawBand = styled.div`
  ${band}
  gap: 7px;
  width: 549px;
  padding-left: 4px;
`;

const ViewBand = styled.div`
  ${band}
  flex: 1;
  gap: 4px;

  ${ToolButton} {
    margin: 0 1px;
  }
`;

const ModeButton = styled.button`
  display: flex;
  align-items: center;
  gap: 4px;
  height: 23px;
  padding: 0 1px;
  border: 1px solid #707070;
  color: #808080;
`;

const Divider = styled.span`
  width: 1px;
  height: 16px;
  background: #b8b8b8;
`;

const Main = styled.main`
  display: flex;
  flex: 1;
  min-height: 0;
  gap: 4px;
`;

const Nav = styled.aside`
  display: flex;
  flex-direction: column;
  width: 166px;
  padding: 1px 1px 2px;
  font-family: ${song};
`;

const NavHeader = styled.div`
  display: flex;
  align-items: center;
  height: 15px;
  margin-bottom: 2px;
  border: 1px solid #a0a0a0;
  border-left: none;
  gap: 2px;
`;

const NavTitle = styled.span`
  flex: 1;
`;

const NavButton = styled.button`
  flex-shrink: 0;
  height: 22px;
  border: 1px solid #a0a0a0;
  border-width: 0 1px 1px;
  background: #f0f0f0;
  box-shadow: inset 1px 1px #fff;
`;

const TreeTools = styled.div`
  display: flex;
  align-items: center;
  gap: 7px;
  height: 26px;
  padding-left: 6px;
  margin-top: 1px;
  background: linear-gradient(#fafafa, #f0f0f0);
`;

const TreeFrame = styled.div`
  display: flex;
  flex: 1;
  flex-direction: column;
  min-height: 0;
  margin: 0 0 1px 1px;
  padding: 0 2px 1px 0;
  border: 1px solid #7c8290;
  background: #fff;
`;

const TreeBody = styled.div`
  display: flex;
  flex: 1;
  min-height: 0;
`;

const Tree = styled.ul`
  flex: 1;
  min-width: 0;
  margin: 0;
  padding: 1px 0 0 3px;
  list-style: none;
  overflow: hidden;
`;

const TreeRow = styled.div`
  display: flex;
  align-items: center;
  height: 16px;
`;

const Stub = styled.span`
  width: 4px;
  border-top: 1px dotted #808080;
`;

const Label = styled.span`
  margin-left: 5px;
  white-space: nowrap;
`;

const Branch = styled.ul`
  margin: 0 0 0 8px;
  padding: 0 0 0 19px;
  border-left: ${(props) => (props.$plain ? "none" : "1px dotted #808080")};
  list-style: none;
`;

const Leaf = styled.li`
  display: flex;
  height: 16px;
  border-left: 1px dotted #808080;

  &:last-child {
    border-image: linear-gradient(#aaa 50%, transparent 50%) 1;
  }
`;

const LeafLine = styled.span`
  flex-shrink: 0;
  width: 9px;
  height: 8px;
  border-bottom: 1px dotted #808080;
`;

const LeafLabel = styled.span`
  display: flex;
  flex-shrink: 0;
  align-items: center;
  gap: 5px;
  padding: 0 4px 0 1px;
  white-space: nowrap;
  background: ${(props) => (props.$active ? "#d9d9d9" : "none")};
`;

const GzLabel = styled(LeafLabel)`
  gap: 6px;
  padding: 0 4px 0 3px;
  background: ${(props) => (props.$active ? "#316ac5" : "none")};
`;

const VScroll = styled.div`
  display: flex;
  flex-direction: column;
  width: 16px;
  background: #f0f0f0;
`;

const VSpace = styled.span`
  flex: ${(props) => props.$grow} 0 0;
`;

const VThumb = styled.span`
  flex: ${(props) => props.$grow} 0 0;
  background: #cdcdcd;
`;

const HScroll = styled.div`
  display: flex;
  align-items: center;
  height: 17px;
  gap: 3px;
  background: #f0f0f0;
`;

const HThumb = styled.span`
  width: 102px;
  height: 15px;
  background: #cdcdcd;
`;

const Work = styled.section`
  display: flex;
  flex: 1;
  flex-direction: column;
  min-width: 0;
`;

const EditRow = styled.div`
  ${band}
  gap: 6px;
  height: 28px;
  padding-left: 5px;
  margin-top: 1px;

  ${CaretSlot} {
    width: 7px;
    margin-left: -2px;
  }
`;

const FloorField = styled.div`
  display: flex;
  align-items: center;
  gap: 3px;
`;

const SelectWrap = styled.span`
  position: relative;
  display: flex;
  width: ${(props) => props.$width};
`;

const baseSelect = css`
  width: 100%;
  appearance: none;
  border: none;
  border-radius: 0;
  background: #fff;
  padding: 0 2px;
`;

const FloorSelect = styled.select`
  ${baseSelect}
  height: 22px;
  margin-left: 2px;
`;

const SelectArrow = styled.span`
  position: absolute;
  top: 2px;
  right: 2px;
  bottom: 2px;
  display: flex;
  align-items: center;
  justify-content: center;
  width: 11px;
  background: ${(props) => (props.$blue ? "#dcebf8" : "none")};
  pointer-events: none;
`;

const Panels = styled.div`
  display: flex;
  flex: 1;
  min-height: 0;
`;

const ComponentColumn = styled.div`
  display: flex;
  flex-direction: column;
  width: 185px;
  padding: 3px 0 2px;
`;

const SearchRow = styled.div`
  display: flex;
  align-items: center;
  gap: 4px;
  height: 28px;
  padding: 1px 0 1px 2px;
  border-right: 1px solid #808080;
  border-bottom: 1px solid #808080;
`;

const SearchInput = styled.input`
  width: 157px;
  height: 24px;
  padding: 0 2px 4px;
  border: 1px solid #767676;
  background: #fff;

  &::placeholder {
    color: #777;
  }
`;

const SearchButton = styled.button`
  display: flex;
  background: #e2f1fa;
`;

const ComponentTree = styled.div`
  flex: 1;
  padding: 1px 0 0 4px;
  border: 1px solid #808080;
  border-width: 0 2px 2px 1px;
  background: #fff;
  font-family: ${song};
`;

const PropertyColumn = styled.div`
  display: flex;
  flex: 1;
  flex-direction: column;
  min-width: 0;
  margin: 0 2px 4px 3px;
  border: 1px solid #dcdcdc;
  border-top: none;
  background: #fff;
  font-family: ${song};
`;

const Tabs = styled.div`
  display: flex;
  height: 21px;
`;

const TabButton = styled.button`
  width: 63px;
  border: 1px solid #d0d0d0;
  border-width: 1px 1px 0 0;
  background: #fff;
`;

const TabRule = styled.span`
  flex: 1;
  border-bottom: 1px solid #dcdcdc;
`;

const PropertyFrame = styled.div`
  position: relative;
  display: flex;
  flex: 1;
  min-height: 0;
  padding: 4px 4px 3px 3px;
`;

const PropertyInner = styled.div`
  display: flex;
  flex: 1;
  justify-content: space-between;
  align-items: flex-start;
  border: 1px solid #a0a0a0;
`;

const OuterScroll = styled(VScroll)`
  align-self: stretch;
`;

const Table = styled.table`
  width: 370px;
  table-layout: fixed;
  border-collapse: separate;
  border-spacing: 0;
`;

const cell = css`
  height: 19px;
  padding: 0 2px;
  border: 1px solid #c0c0c0;
  border-width: 0 1px 1px 0;
  font-weight: 400;
  line-height: 18px;
  white-space: nowrap;
`;

const HeadCell = styled.th`
  ${cell}
  height: 23px;
  padding: 0;
  background: ${(props) => (props.$hot ? "linear-gradient(#fbd692, #f2c161)" : "linear-gradient(#fff, #efefef)")};
  color: ${(props) => (props.$hot ? "#5a0045" : "#000")};
`;

const NoCell = styled.td`
  ${cell}
  padding: 0;
  background: ${(props) => (props.$selected ? "#ffd58d" : "linear-gradient(90deg, #fff, #eee)")};
  color: ${(props) => (props.$selected ? "#5a0045" : "#000")};
  text-align: center;
`;

const tones = { blue: "#0000f0", gray: "#808080" };

const NameCell = styled.td`
  ${cell}
  background: ${(props) => (props.$selected ? "#0078d7" : "#fff")};
  color: ${(props) => (props.$selected ? "#fff" : tones[props.$tone] || "#000")};
`;

const NameInner = styled.div`
  display: flex;
  height: 18px;
  line-height: 20px;
`;

const BoxSlot = styled.span`
  display: flex;
  align-items: center;
  width: 18px;
`;

const ExpandBox = styled.button`
  width: 13px;
  height: 13px;
  border: 1px solid #b0b0b0;
`;

const Twig = styled.span`
  width: 22px;
  height: ${(props) => (props.$last ? "9px" : "19px")};
  margin: 0 0 0 6px;
  border-left: 1px solid #c0c0c0;

  &::before {
    content: "";
    display: block;
    width: 16px;
    height: 9px;
    border-bottom: 1px solid #c0c0c0;
  }
`;

const ValueCell = styled.td`
  ${cell}
  background: ${(props) => (props.$selected ? "#d9eaf9" : "#fff")};
`;

const RebarText = styled.span`
  display: flex;
  align-items: center;
  gap: 1px;
  color: #808080;
`;

const CheckCell = styled.td`
  ${cell}
  text-align: center;
`;

const Check = styled.input`
  display: block;
  appearance: none;
  width: 13px;
  height: 13px;
  margin: 0 auto;
  border: 1px solid #222;
  background: #fff;
`;

const Dialog = styled.section`
  position: absolute;
  top: -1px;
  right: 19px;
  bottom: -1px;
  left: 390px;
  display: flex;
  flex-direction: column;
  padding: 0 7px 7px 6px;
  border: 1px solid #2b2b2b;
  background: linear-gradient(#99b4d1, #b9d1ea 32px);
  box-shadow: inset -1px -1px #4cc9e8;
  font-family: "Noto Sans", "Noto Sans CJK SC", sans-serif;
`;

const DialogTitle = styled.h2`
  height: 31px;
  margin: 0;
  padding-top: 3px;
  font-size: 12px;
  font-weight: 400;
  line-height: 32px;
`;

const DialogBody = styled.div`
  display: flex;
  flex: 1;
  flex-direction: column;
  min-height: 0;
  padding-top: 5px;
  border: 1px solid #e8e8e8;
  background: #f0f0f0;
`;

const DialogTools = styled.div`
  display: flex;
  align-items: center;
  height: 28px;
  padding-left: 7px;
  background: linear-gradient(#fafafa, #f0f0f0);
`;

const Grip = styled.span`
  width: 2px;
  height: 16px;
  margin-right: 3px;
  background: repeating-linear-gradient(#b0b0b0 0 2px, transparent 2px 4px);
`;

const DialogButton = styled.button`
  height: 23px;
  padding: 0 4px;
  border: 1px solid ${(props) => (props.$on ? "#0078d7" : "transparent")};
  background: ${(props) => (props.$on ? "#e0eef9" : "none")};
  color: ${(props) => (props.$dim ? "#808080" : "#000")};
`;

const DialogDivider = styled(Divider)`
  margin: 0 2px;
`;

const RebarLabel = styled.label`
  padding-left: 4px;
`;

const RebarSelect = styled.select`
  ${baseSelect}
  height: 24px;
  border: 1px solid #0078d7;
`;

const ArcSelect = styled.select`
  ${baseSelect}
  height: 23px;
  border: 1px solid #7a7a7a;
  background: #f3f3f3;
`;

const Canvas = styled.div`
  position: relative;
  flex: 1;
  min-height: 0;
  margin: 0 3px 6px 5px;
  border: 2px solid #f00;
  background: #000;
  overflow: hidden;
`;

const Drawing = styled.svg`
  width: 100%;
  height: 100%;
`;

const CadText = styled.text`
  fill: ${(props) => (props.$green ? "#0f0" : "#fff")};
  font-family: "Liberation Serif", "Noto Sans CJK SC", serif;
  font-size: ${(props) => (props.$small ? "30px" : "36px")};
  font-weight: 300;
`;

const Floating = styled.div`
  position: absolute;
  top: 3px;
  left: 8px;
  width: 200px;
  padding-top: 6px;
  border: 1px solid #444;
  background: #fff;
`;

const FloatingTitle = styled.div`
  height: 21px;
  padding-left: 2px;
  background: #a0a0a0;
  color: #fff;
  line-height: 20px;
`;

const FloatingTools = styled.div`
  display: flex;
  align-items: center;
  height: 26px;
  background: linear-gradient(#fafafa, #f0f0f0);
`;

const FloatCaret = styled.span`
  flex: 1;
  padding-left: 2px;
`;

const DialogStatus = styled.footer`
  display: flex;
  height: 20px;
  gap: 2px;
  font-family: ${song};
`;

const StatusBar = styled.footer`
  display: flex;
  height: 21px;
  gap: 2px;
  font-family: ${song};
`;

const StatusCell = styled.span`
  flex: ${(props) => (props.$grow ? "1" : "none")};
  width: ${(props) => props.$width || "auto"};
  padding-left: ${(props) => (props.$pad ? "6px" : "1px")};
  border: 1px solid #d8d8d8;
  background: linear-gradient(#fcfcfc, #f0f0f0);
  line-height: 18px;
  white-space: pre;
`;

const MessageCell = styled(StatusCell)`
  display: flex;
  align-items: flex-end;
  justify-content: space-between;
  white-space: nowrap;
`;

const TaskRow = styled.footer`
  display: flex;
  height: 40px;
  background: #040c10;
  color: #fff;
`;

const StartButton = styled.button`
  display: flex;
  align-items: center;
  justify-content: center;
  width: 48px;
  background: #000;
`;

const TaskSearch = styled.div`
  display: flex;
  align-items: center;
  gap: 4px;
  width: 344px;
  padding: 0 12px 0 9px;
  background: #333;
`;

const CortanaRing = styled.span`
  width: 22px;
  height: 22px;
  border: 3px solid #f0f0f0;
  border-radius: 50%;
`;

const TaskInput = styled.input`
  flex: 1;
  min-width: 0;
  border: none;
  background: none;
  padding: 0 0 0 1px;
  font-size: 14px;

  &::placeholder {
    color: #9a9a9a;
  }
`;

const TaskGroup = styled.div`
  display: flex;
  margin-left: ${(props) => (props.$gap ? "2px" : "0")};
`;

const TaskButton = styled.button`
  position: relative;
  display: flex;
  align-items: center;
  justify-content: center;
  width: ${(props) => (props.$wide ? "51px" : "42px")};
  background: ${(props) => (props.$active ? "#333d41" : "none")};

  &::after {
    content: "";
    position: absolute;
    bottom: 0;
    left: ${(props) => (props.$active ? "0" : "4px")};
    right: ${(props) => (props.$active ? "0" : "4px")};
    height: ${(props) => (props.$open ? "2px" : "0")};
    background: #76b9ed;
  }
`;

const IeButton = styled(TaskButton)`
  --orbit: #f3c43a;
`;

const TaskBell = styled.span`
  position: absolute;
  top: 5px;
  right: 11px;
`;

const Tray = styled.div`
  display: flex;
  align-items: center;
  margin-left: auto;
`;

const TrayStack = styled.div`
  display: flex;
  flex-direction: column;
  align-items: center;
  width: ${(props) => (props.$wide ? "94px" : "86px")};
  line-height: 18px;
`;

const TrayIcons = styled.div`
  display: flex;
  align-items: center;
  gap: 9px;
`;

const NotifyButton = styled.button`
  position: relative;
  width: 40px;
  padding-left: 4px;
`;

const Badge = styled.span`
  position: absolute;
  top: 5px;
  left: 12px;
  width: 16px;
  height: 16px;
  border: 1px solid #666;
  border-radius: 50%;
  background: #2c2c2c;
  color: #fff;
  font-size: 11px;
  line-height: 14px;
`;

const DesktopEdge = styled.span`
  width: 5px;
  height: 40px;
  border-left: 1px solid #555;
`;
